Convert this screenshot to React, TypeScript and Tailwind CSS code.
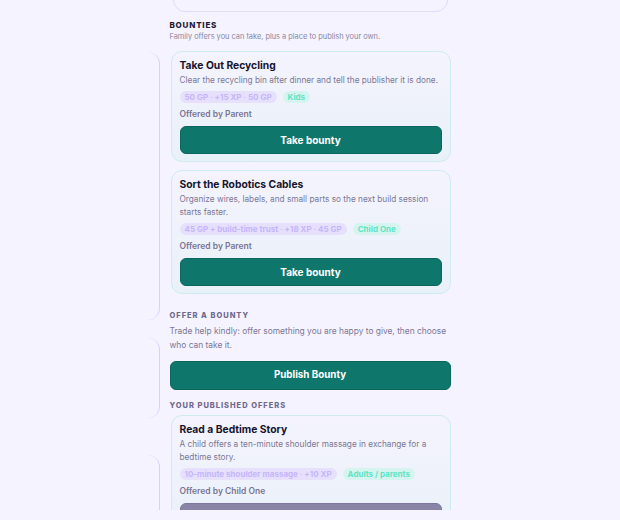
import React from 'react';

interface Bounty {
  title: string;
  description: string;
  reward: string;
  audience: string;
  offeredBy: string;
  action: string;
  disabled?: boolean;
}

const available: Bounty[] = [
  {
    title: 'Take Out Recycling',
    description: 'Clear the recycling bin after dinner and tell the publisher it is done.',
    reward: '50 GP · +15 XP · 50 GP',
    audience: 'Kids',
    offeredBy: 'Parent',
    action: 'Take bounty',
  },
  {
    title: 'Sort the Robotics Cables',
    description: 'Organize wires, labels, and small parts so the next build session starts faster.',
    reward: '45 GP + build-time trust · +18 XP · 45 GP',
    audience: 'Child One',
    offeredBy: 'Parent',
    action: 'Take bounty',
  },
];

const published: Bounty[] = [
  {
    title: 'Read a Bedtime Story',
    description: 'A child offers a ten-minute shoulder massage in exchange for a bedtime story.',
    reward: '10-minute shoulder massage · +10 XP',
    audience: 'Adults / parents',
    offeredBy: 'Child One',
    action: 'Waiting for a taker',
    disabled: true,
  },
];

function BountyCard({ bounty }: { bounty: Bounty }) {
  return (
    <div className="rounded-[11px] border border-[#cdebf0] bg-gradient-to-b from-[#f4f3fe] to-[#e9f1f8] px-2 pt-[6px] pb-[7px]">
      <h3 className="text-[10.3px] font-bold leading-[14px] text-[#17152d]">{bounty.title}</h3>
      <p className="mt-[2px] text-[8.25px] leading-[13px] text-[#7c7896]">{bounty.description}</p>
      <div className="mt-[4px] flex gap-[6px]">
        <span className="rounded-full bg-[#e6e0fc] px-[5px] text-[8px] font-bold leading-[12px] text-[#c5b6fb]">
          {bounty.reward}
        </span>
        <span className="rounded-full bg-[#d6f4ef] px-[5px] text-[8px] font-bold leading-[12px] text-[#5fe3c6]">
          {bounty.audience}
        </span>
      </div>
      <p className="mt-[5px] text-[8.5px] font-semibold leading-[12px] text-[#7a7593]">
        Offered by {bounty.offeredBy}
      </p>
      <button
        className={
          bounty.disabled
            ? 'mt-[6px] h-[28px] w-full rounded-[6px] border border-[#7c779a] bg-[#8a85a6] text-[10px] font-bold text-white'
            : 'mt-[6px] h-[28px] w-full rounded-[6px] border border-[#0b665d] bg-[#0f766b] text-[10px] font-bold text-white'
        }
      >
        {bounty.action}
      </button>
    </div>
  );
}

export default function App() {
  return (
    <div
      className="h-[520px] w-[620px] overflow-hidden bg-[#f5f3ff]"
      style={{ fontFamily: 'Inter, "Noto Sans", sans-serif' }}
    >
      <div className="flex h-[510px] justify-center overflow-hidden">
        {/* side rail */}
        <div className="ml-[-22px] mr-[10px] flex w-[12px] flex-col">
          <div className="h-[52px] shrink-0" />
          <div className="h-[268px] shrink-0 rounded-r-[12px] border-r border-[#d8cffb]" />
          <div className="h-[18px] shrink-0" />
          <div className="h-[80px] shrink-0 rounded-r-[12px] border-r border-[#d8cffb]" />
          <div className="h-[37px] shrink-0" />
          <div className="h-[120px] shrink-0 rounded-r-[12px] border-r border-[#d8cffb]" />
        </div>

        <div className="w-[281px]">
          {/* end of the card above */}
          <div className="mx-[3px] mt-[-30px] h-[42px] rounded-[12px] border border-[#e0dafc]" />

          <h2 className="mt-[7px] text-[8px] font-extrabold uppercase leading-[12px] tracking-[0.1em] text-[#1d1a36]">
            Bounties
          </h2>
          <p className="text-[7.4px] leading-[12px] text-[#8a86a2]">
            Family offers you can take, plus a place to publish your own.
          </p>

          <div className="mt-[8px] ml-[1px] flex flex-col gap-[8px]">
            {available.map((b) => (
              <BountyCard key={b.title} bounty={b} />
            ))}
          </div>

          <h2 className="mt-[16px] text-[7.5px] font-extrabold uppercase leading-[12px] tracking-[0.13em] text-[#6f6a8c]">
            Offer a bounty
          </h2>
          <p className="mt-[2px] text-[8.4px] leading-[14px] text-[#7c7896]">
            Trade help kindly: offer something you are happy to give, then choose who can take it.
          </p>
          <button className="mt-[9px] h-[29px] w-full rounded-[6px] border border-[#0b665d] bg-[#0f766b] text-[9.8px] font-bold text-white">
            Publish Bounty
          </button>

          <h2 className="mt-[10px] text-[7.5px] font-extrabold uppercase leading-[12px] tracking-[0.13em] text-[#6f6a8c]">
            Your published offers
          </h2>
          <div className="mt-[3px] ml-[1px]">
            {published.map((b) => (
              <BountyCard key={b.title} bounty={b} />
            ))}
          </div>
        </div>
      </div>
    </div>
  );
}
